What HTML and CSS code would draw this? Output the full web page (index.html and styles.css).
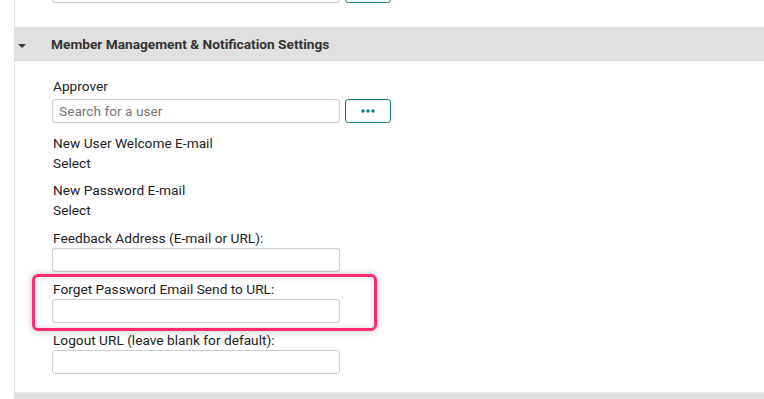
FILE: index.html
```html
<!DOCTYPE html>
<html lang="en">
<head>
    <meta charset="UTF-8">
    <meta name="viewport" content="width=device-width, initial-scale=1.0">
    <title>Member Management &amp; Notification Settings</title>
    <link rel="stylesheet" href="styles.css">
</head>
<body>
    <div class="panel">
        <div class="section-body section-prev">
            <div class="lookup">
                <input type="text" class="text-input">
                <button type="button" class="lookup-btn" aria-label="More">
                    <svg width="14" height="4" viewBox="0 0 14 4"><circle cx="2" cy="2" r="1.8"/><circle cx="7" cy="2" r="1.8"/><circle cx="12" cy="2" r="1.8"/></svg>
                </button>
            </div>
        </div>

        <div class="section-header">
            <span class="caret"></span>
            <h2>Member Management &amp; Notification Settings</h2>
        </div>

        <div class="section-body">
            <div class="field field-lookup">
                <label for="approver">Approver</label>
                <div class="lookup">
                    <input type="text" id="approver" class="text-input" placeholder="Search for a user">
                    <button type="button" class="lookup-btn" aria-label="More">
                        <svg width="14" height="4" viewBox="0 0 14 4"><circle cx="2" cy="2" r="1.8"/><circle cx="7" cy="2" r="1.8"/><circle cx="12" cy="2" r="1.8"/></svg>
                    </button>
                </div>
            </div>

            <div class="field field-select">
                <label>New User Welcome E-mail</label>
                <div class="value">Select</div>
            </div>

            <div class="field field-select">
                <label>New Password E-mail</label>
                <div class="value">Select</div>
            </div>

            <div class="field">
                <label for="feedback">Feedback Address (E-mail or URL):</label>
                <input type="text" id="feedback" class="text-input">
            </div>

            <div class="field highlighted">
                <label for="forget_url">Forget Password Email Send to URL:</label>
                <input type="text" id="forget_url" class="text-input">
                <div class="highlight"></div>
            </div>

            <div class="field">
                <label for="logout_url">Logout URL (leave blank for default):</label>
                <input type="text" id="logout_url" class="text-input">
            </div>
        </div>

        <div class="section-header section-next"></div>
    </div>
</body>
</html>
```

FILE: styles.css
```css
body {
    font-family: Roboto, 'Liberation Sans', Arial, sans-serif;
    font-size: 13.7px;
    color: #222;
    background-color: white;
    margin: 0;
    overflow: hidden;
}
.panel {
    margin-left: 14px;
}
.section-body {
    border-left: 1px solid #e6e6e6;
    padding: 15px 0 18px 37px;
}
.section-prev {
    padding-top: 0;
    padding-bottom: 24px;
}
.section-prev .lookup {
    margin-top: -21px;
}
.section-header {
    display: flex;
    align-items: center;
    height: 33px;
    background-color: #e0e0e0;
    border-bottom: 1px solid #d8d8d8;
}
.section-header h2 {
    margin: 0;
    font-size: 13.7px;
    font-weight: bold;
    color: #333;
}
.caret {
    width: 0;
    height: 0;
    margin: 4px 25px 0 4px;
    border-left: 4px solid transparent;
    border-right: 4px solid transparent;
    border-top: 4px solid #333;
}
.section-next {
    height: 10px;
    border-bottom: none;
    border-top: 1px solid #e8e8e8;
}
.field {
    margin-bottom: 8px;
}
.field:last-child {
    margin-bottom: 0;
}
.field label {
    display: block;
    line-height: 18px;
    margin-bottom: 1px;
    padding-left: 1px;
}
.field-lookup {
    padding-top: 1px;
    margin-bottom: 11px;
}
.field-lookup label {
    margin-bottom: 4px;
}
.field-select {
    margin-bottom: 8px;
}
.field-select label {
    margin-bottom: 0;
}
.field-select + .field-select {
    margin-bottom: 9px;
}
.value {
    line-height: 20px;
    padding: 1px 0 0 1px;
}
.lookup {
    display: flex;
    gap: 5px;
}
.text-input {
    display: block;
    width: 288px;
    height: 24px;
    padding: 0 6px;
    border: 1px solid #ccc;
    border-radius: 3px;
    box-sizing: border-box;
    font-family: inherit;
    font-size: 13.7px;
    color: #333;
}
.text-input::placeholder {
    color: #777;
}
.lookup-btn {
    display: flex;
    align-items: center;
    justify-content: center;
    width: 46px;
    height: 24px;
    padding: 0;
    border: 1px solid #1b7b7b;
    border-radius: 3px;
    background-color: white;
    cursor: pointer;
}
.lookup-btn svg {
    fill: #1b7b7b;
}
.highlighted {
    position: relative;
}
.highlight {
    position: absolute;
    left: -20px;
    top: -6px;
    width: 345px;
    height: 57px;
    border: 3px solid #ff2d6e;
    border-radius: 6px;
    box-sizing: border-box;
    box-shadow: 0 0 7px rgba(0,0,0,0.25), inset 0 0 6px rgba(0,0,0,0.15);
    pointer-events: none;
}
```
